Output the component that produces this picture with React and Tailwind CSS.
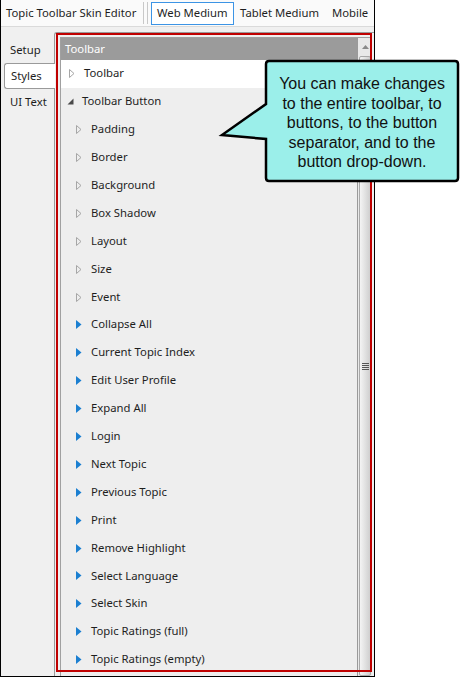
const ui = { fontFamily: '"Noto Sans", "Open Sans", sans-serif' };

const children = ['Padding', 'Border', 'Background', 'Box Shadow', 'Layout', 'Size', 'Event'];
const items = [
  'Collapse All',
  'Current Topic Index',
  'Edit User Profile',
  'Expand All',
  'Login',
  'Next Topic',
  'Previous Topic',
  'Print',
  'Remove Highlight',
  'Select Language',
  'Select Skin',
  'Topic Ratings (full)',
  'Topic Ratings (empty)',
];

// hollow arrow (collapsed)
const Hollow = () => (
  <svg width="6" height="9" viewBox="0 0 6 9" className="shrink-0">
    <path d="M0.5 0.5 L5 4.5 L0.5 8.5 Z" fill="none" stroke="#a6a6a6" strokeWidth="1" />
  </svg>
);

// solid blue arrow
const Blue = () => (
  <svg width="6" height="9" viewBox="0 0 6 9" className="shrink-0">
    <path d="M0 0 L5.5 4.5 L0 9 Z" fill="#1b7fd1" />
  </svg>
);

// expanded glyph
const Expanded = () => (
  <svg width="7" height="7" viewBox="0 0 7 7" className="shrink-0">
    <path d="M6.5 0.5 L6.5 6.5 L0.5 6.5 Z" fill="#4a4a4a" />
  </svg>
);

function Row({ icon, label, indent, white }) {
  return (
    <div className={`h-[27.9px] flex items-center ${white ? 'bg-white' : ''} ${indent}`}>
      <span className="w-[15px] flex items-center">{icon}</span>
      <span className="text-[11.3px] text-[#1e1e1e] whitespace-nowrap">{label}</span>
    </div>
  );
}

function Scrollbar() {
  return (
    <div className="w-[15px] flex flex-col bg-[#e9e9e9] border-l border-[#9a9a9a]">
      <div className="h-[18px] flex items-center justify-center">
        <svg width="7" height="4" viewBox="0 0 7 4">
          <path d="M3.5 0 L7 4 L0 4 Z" fill="#8a8a8a" />
        </svg>
      </div>
      <div className="flex-1 mx-[1px] rounded-[2px] border border-[#a9a9a9] bg-gradient-to-r from-[#f4f4f4] via-[#e2e2e2] to-[#cfcfcf] flex items-center justify-center">
        <div className="flex flex-col gap-[1px]">
          <div className="w-[7px] h-[1px] bg-[#555]" />
          <div className="w-[7px] h-[1px] bg-[#555]" />
          <div className="w-[7px] h-[1px] bg-[#555]" />
          <div className="w-[7px] h-[1px] bg-[#555]" />
        </div>
      </div>
    </div>
  );
}

export default function App() {
  return (
    <div className="relative w-[468px] h-[677px] bg-white overflow-hidden" style={ui}>
      <div className="w-[375px] h-[677px] flex flex-col bg-[#f0f0f0] border-l border-r border-b border-black">
        {/* title bar */}
        <div className="h-[27px] bg-[#fafafa] border-b border-[#dadada] flex items-center text-[11.3px] text-[#1e1e1e] whitespace-nowrap">
          <span className="pl-[5px] w-[142px]">Topic Toolbar Skin Editor</span>
          <span className="w-[1px] h-[22px] bg-[#c8c8c8]" />
          <span className="w-[3px]" />
          <span className="w-[1px] h-[22px] bg-[#c8c8c8]" />
          <span className="w-[3px]" />
          <span className="h-[23px] w-[83px] border border-[#3c94e5] bg-white flex items-center pl-[5px]">Web Medium</span>
          <span className="pl-[6px] w-[98px]">Tablet Medium</span>
          <span>Mobile</span>
        </div>

        <div className="flex-1 flex pt-[5px]">
          {/* side tabs */}
          <div className="w-[53px] flex flex-col text-[11.3px] text-[#1e1e1e]">
            <div className="h-[31px] flex items-center pl-[9px] pt-[6px]">Setup</div>
            <div className="h-[26px] ml-[3px] -mr-[1px] relative z-10 bg-white border border-r-0 border-[#9a9a9a] rounded-l-[3px] flex items-center pl-[6px] pt-[1px]">Styles</div>
            <div className="h-[27px] flex items-center pl-[9px]">UI Text</div>
          </div>

          {/* panel */}
          <div className="flex-1 flex border-l border-t border-[#9a9a9a] rounded-tl-[3px] pl-[5px] pt-[4px] pr-[2px]">
            <div className="flex-1 flex border-l border-t border-[#a0a0a0]">
              <div className="flex-1 flex flex-col">
                <div className="h-[22px] bg-[#9b9b9b] text-white text-[11.3px] flex items-center pl-[4px]">Toolbar</div>
                <div className="flex-1 bg-[#eeeeee]">
                  <Row white icon={<Hollow />} label="Toolbar" indent="pl-[8px]" />
                  <Row icon={<Expanded />} label="Toolbar Button" indent="pl-[6px]" />
                  {children.map((c) => (
                    <Row key={c} icon={<Hollow />} label={c} indent="pl-[15px]" />
                  ))}
                  {items.map((c) => (
                    <Row key={c} icon={<Blue />} label={c} indent="pl-[15px]" />
                  ))}
                </div>
              </div>
              <Scrollbar />
            </div>
          </div>
        </div>
      </div>

      {/* red annotation frame */}
      <div className="absolute left-[56px] top-[33px] w-[316px] h-[639px] border-2 border-[#c00000] pointer-events-none" />

      {/* callout */}
      <svg className="absolute left-0 top-0" width="468" height="677" viewBox="0 0 468 677">
        <path
          d="M269 61 H455 Q458 61 458 64 V178 Q458 181 455 181 H269 Q266 181 266 178 V139 L222 135 L266 104 V64 Q266 61 269 61 Z"
          fill="#9befea"
          stroke="#000"
          strokeWidth="2.5"
          strokeLinejoin="miter"
        />
      </svg>
      <div
        className="absolute left-[266px] top-[74px] w-[192px] text-center text-[16px] leading-[19.5px] text-[#111]"
        style={{ fontFamily: '"Liberation Sans", Arial, sans-serif' }}
      >
        You can make changes
        <br />
        to the entire toolbar, to
        <br />
        buttons, to the button
        <br />
        separator, and to the
        <br />
        button drop-down.
      </div>
    </div>
  );
}
